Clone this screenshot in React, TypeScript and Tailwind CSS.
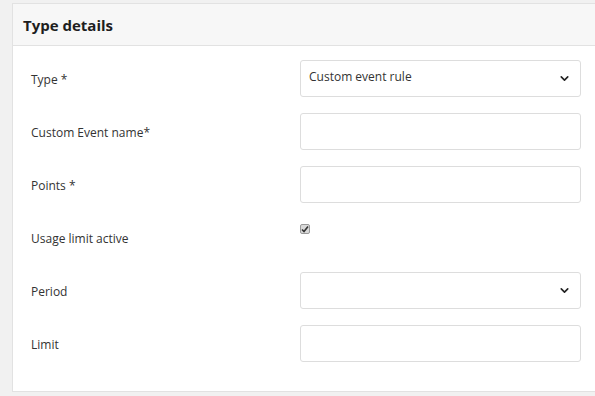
import { ChevronDown } from 'lucide-react';

const font = { fontFamily: '"Open Sans", "Noto Sans", sans-serif' };

function Row({ label, children }: { label: string; children: React.ReactNode }) {
  return (
    <div className="flex h-[37px] items-center">
      <div className="w-[269px] text-[12px] text-[#333] mt-[2px]">{label}</div>
      <div className="w-[281px] h-full">{children}</div>
    </div>
  );
}

function Box({ text, select }: { text?: string; select?: boolean }) {
  return (
    <div className="h-full flex items-center justify-between border border-[#dddddd] rounded-[3px] bg-white pl-[8px] pr-[9px]">
      <span className="text-[12px] text-[#333] -mt-[3px]">{text}</span>
      {select && <ChevronDown size={13} strokeWidth={3} className="text-[#222]" />}
    </div>
  );
}

export default function App() {
  return (
    <div className="w-[595px] h-[396px] overflow-hidden bg-[#f1f1f1] pt-[3px]" style={font}>
      <div className="ml-[12px] w-[620px] bg-white border border-[#e2e2e2]">
        <div className="h-[42px] bg-[#f7f7f7] border-b border-[#e2e2e2] flex items-center pl-[10px]">
          <h2 className="text-[15px] font-bold text-[#1e1e1e] mt-[1px]">Type details</h2>
        </div>
        <div className="pl-[18px] pt-[14px] pb-[29px] flex flex-col gap-[16px]">
          <Row label="Type *"><Box text="Custom event rule" select /></Row>
          <Row label="Custom Event name*"><Box /></Row>
          <Row label="Points *"><Box /></Row>
          <div className="flex h-[37px]">
            <div className="w-[269px] text-[12px] text-[#333] flex items-center mt-[2px]">Usage limit active</div>
            <div className="pt-[5px]">
              <div className="w-[10px] h-[10px] rounded-[2px] bg-[#d9d9d9] border border-[#9a9a9a] flex items-center justify-center">
                <svg width="8" height="8" viewBox="0 0 8 8">
                  <path d="M1 4.5 L3 6.5 L7 1.5" fill="none" stroke="#333" strokeWidth="1.6" />
                </svg>
              </div>
            </div>
          </div>
          <Row label="Period"><Box select /></Row>
          <Row label="Limit"><Box /></Row>
        </div>
      </div>
    </div>
  );
}
